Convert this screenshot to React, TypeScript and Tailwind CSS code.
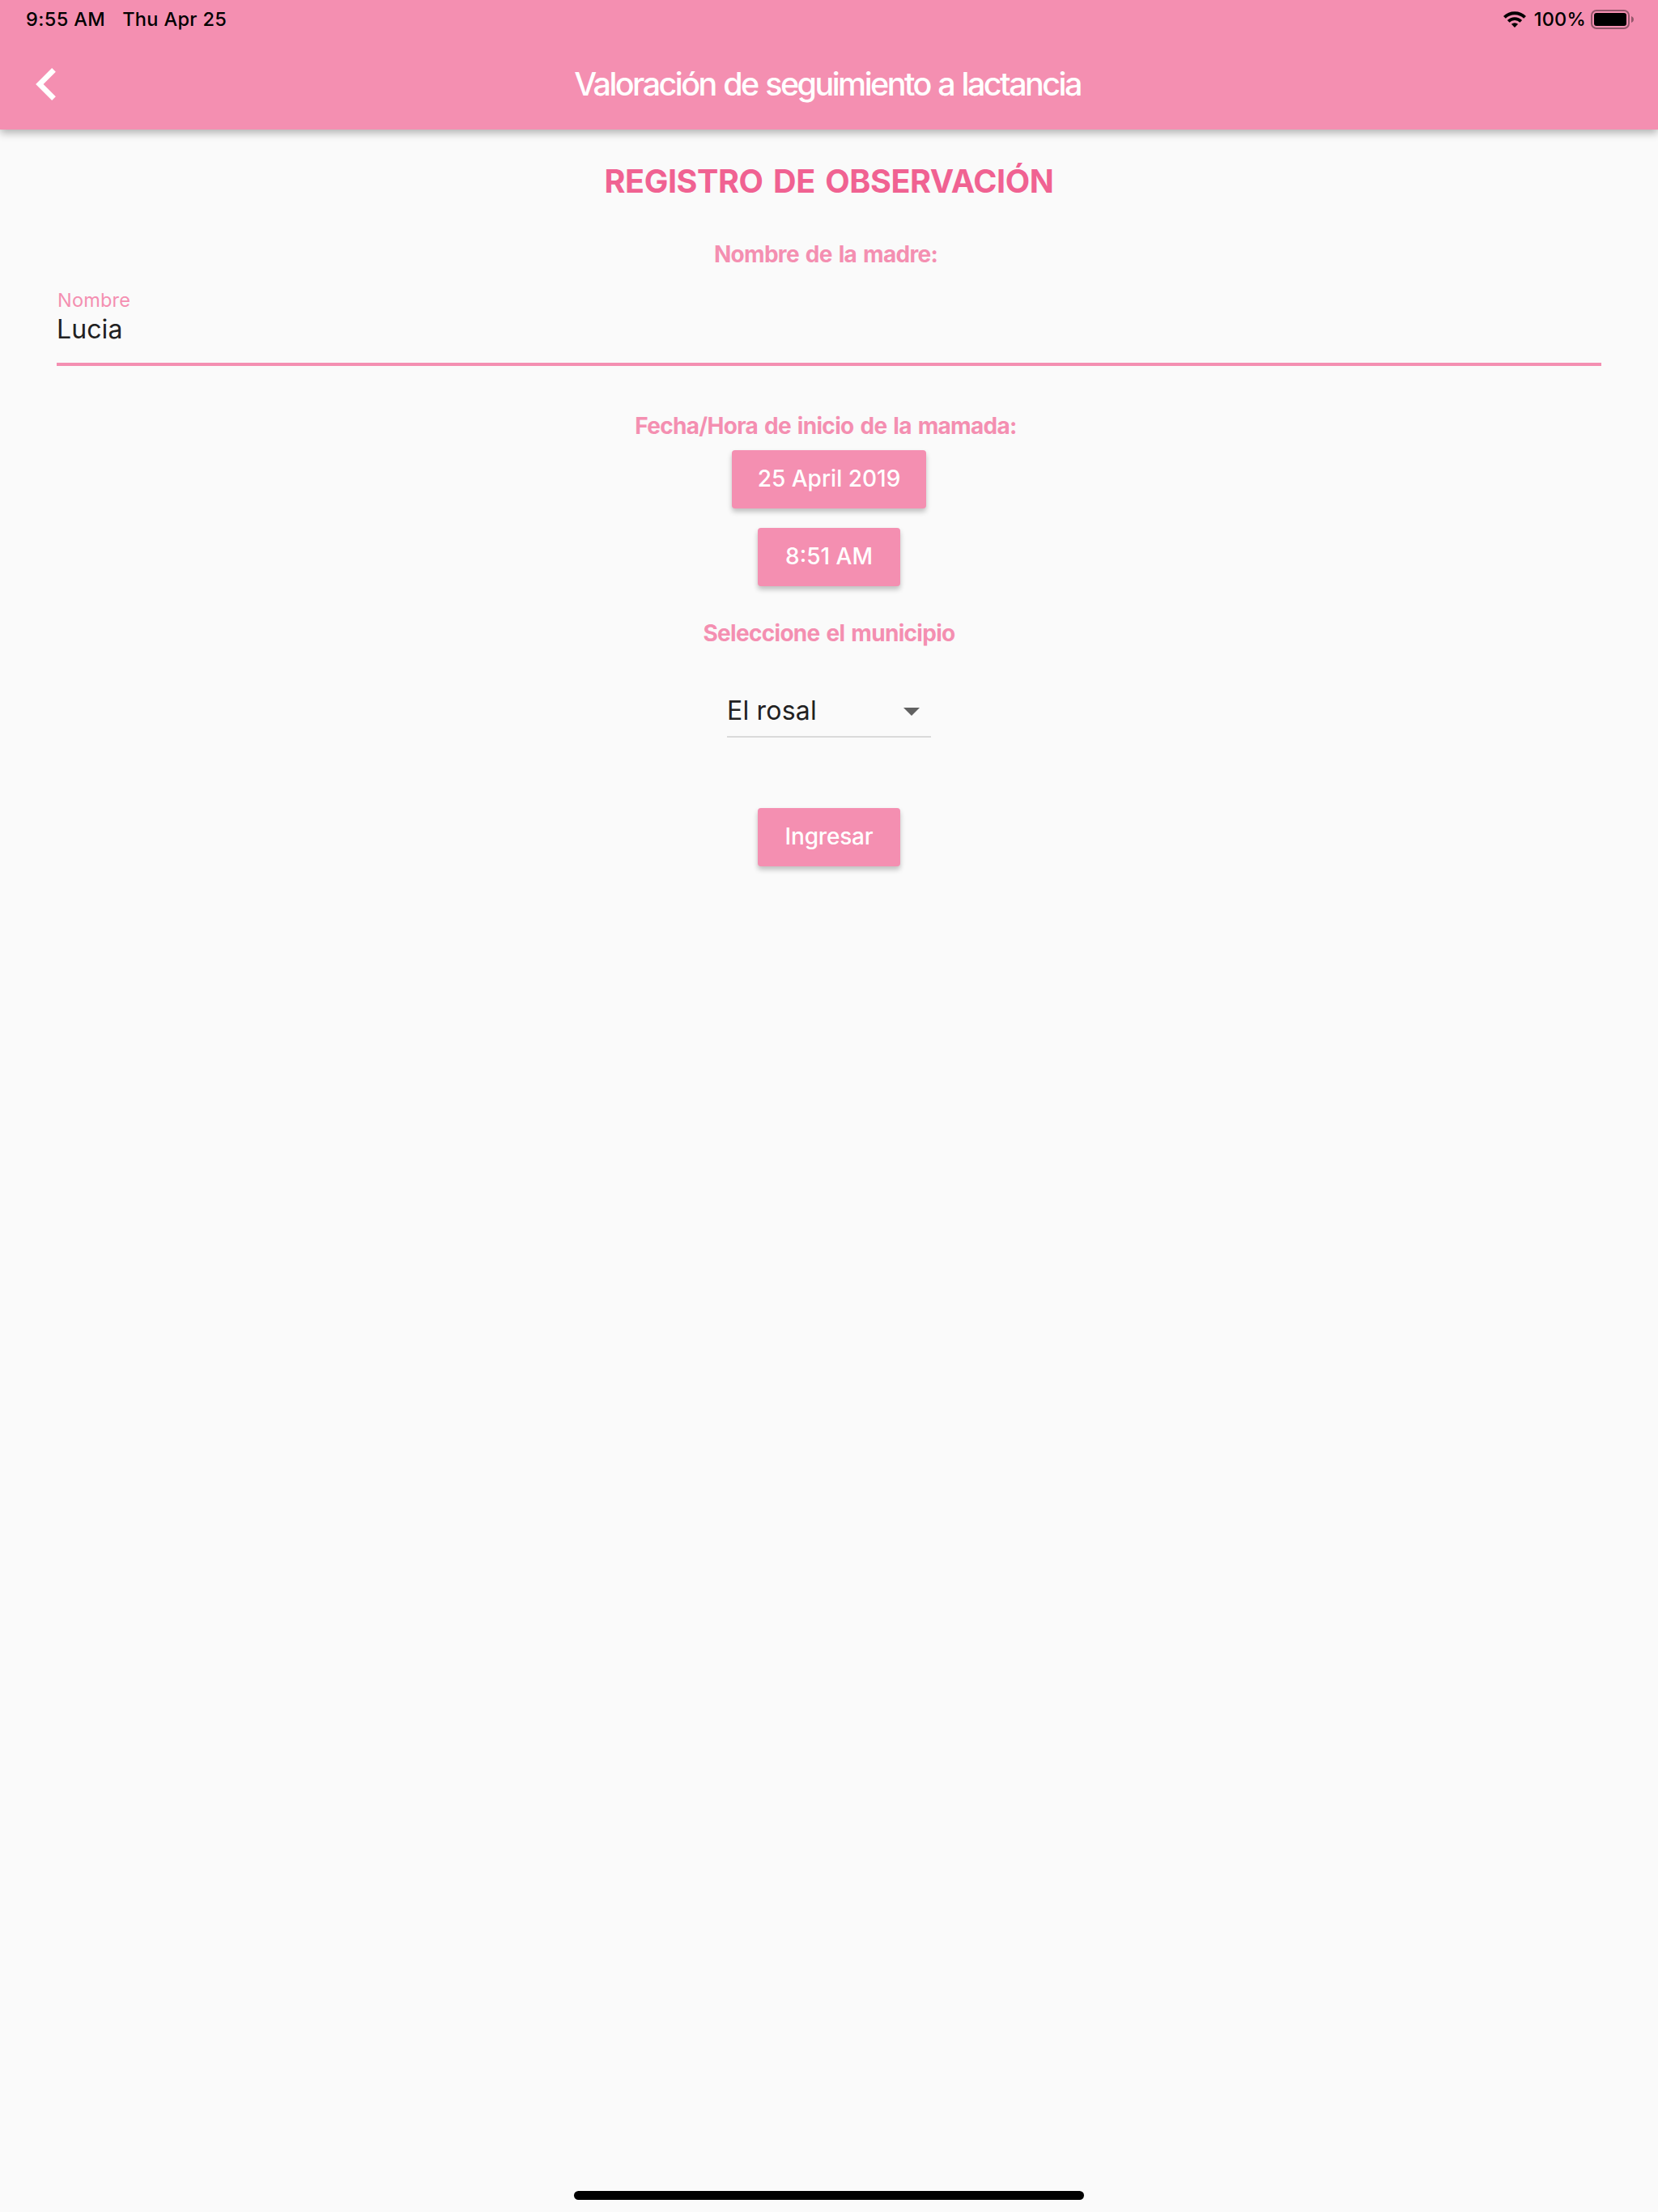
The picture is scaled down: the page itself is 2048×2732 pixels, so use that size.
import type { ReactNode } from 'react';

type SectionLabelProps = {
  className: string;
  children: ReactNode;
};

type RaisedButtonProps = {
  className: string;
  children: ReactNode;
};

function WifiIcon() {
  return (
    <svg width="28" height="20" viewBox="0 0 28 20" aria-hidden="true">
      <path d="M1.4 7.4a17.8 17.8 0 0 1 25.2 0" fill="none" stroke="#000" strokeWidth="4" />
      <path d="M6.2 12.3a11 11 0 0 1 15.6 0" fill="none" stroke="#000" strokeWidth="3.8" />
      <path d="M14 20l-4.1-4.2a5.9 5.9 0 0 1 8.2 0z" />
    </svg>
  );
}

function BatteryIcon() {
  return (
    <svg width="54" height="24" viewBox="0 0 54 24" aria-hidden="true">
      <rect x="1" y="1" width="46" height="22" rx="6" fill="none" stroke="#000" strokeOpacity="0.4" strokeWidth="2" />
      <rect x="4" y="4" width="40" height="16" rx="3" />
      <path d="M50 8c1.900.7 3 2.200 3 4s-1.100 3.300-3 4z" fillOpacity="0.4" />
    </svg>
  );
}

function StatusBar() {
  return (
    <div className="flex h-12 items-start justify-between pt-2 pr-[29px] pl-8 text-[23.500px] leading-8 font-medium text-black">
      <div className="flex gap-[21px]">
        <span className="tracking-[0.4px]">9:55 AM</span>
        <span className="tracking-[0.35px]">Thu Apr 25</span>
      </div>
      <div className="flex items-center">
        <WifiIcon />
        <span className="ml-2.5 tracking-[0.2px]">100%</span>
        <span className="ml-1.5">
          <BatteryIcon />
        </span>
      </div>
    </div>
  );
}

function AppBar() {
  return (
    <div className="grid h-28 grid-cols-[200px_1fr_200px] items-center">
      <button type="button" aria-label="Atrás" className="pl-11">
        <svg width="25" height="40" viewBox="8 6 7.410 12" fill="#fff" aria-hidden="true">
          <path d="M15.410 7.410L14 6l-6 6 6 6 1.410-1.410L10.830 12z" />
        </svg>
      </button>
      <h1 className="pr-1 text-center text-[39.500px] leading-12 font-medium tracking-[-2.550px] text-white [word-spacing:1.500px]">
        Valoración de seguimiento a lactancia
      </h1>
    </div>
  );
}

function SectionLabel({ className, children }: SectionLabelProps) {
  return (
    <p
      className={`text-[28px] leading-[34px] font-bold tracking-[-0.700px] text-[#f48fb1] [word-spacing:2px] ${className}`}
    >
      {children}
    </p>
  );
}

function RaisedButton({ className, children }: RaisedButtonProps) {
  return (
    <button
      type="button"
      className={`h-[72px] rounded-[4px] bg-[#f48fb1] pb-0.5 text-[28px] leading-[34px] font-medium text-white shadow-[0_4px_6px_rgba(0,0,0,0.24)] ${className}`}
    >
      {children}
    </button>
  );
}

export default function App() {
  return (
    <div className="flex h-[2732px] w-[2048px] flex-col bg-[#fafafa] font-['Inter',sans-serif]">
      <header className="h-40 bg-[#f48fb1] shadow-[0_4px_10px_rgba(0,0,0,0.3)]">
        <StatusBar />
        <AppBar />
      </header>

      <main className="flex flex-1 flex-col items-center px-[70px] pt-10">
        <h2 className="text-[39.500px] leading-12 font-bold tracking-[-0.400px] text-[#f06292] [word-spacing:3.500px]">
          REGISTRO DE OBSERVACIÓN
        </h2>

        <SectionLabel className="mt-[49px] mr-2">Nombre de la madre:</SectionLabel>
        <div className="mt-[26px] h-[95px] w-full border-b-4 border-[#f48fb1]">
          <p className="pl-px text-[23.500px] leading-7 tracking-[0.2px] text-[#f48fb1]">Nombre</p>
          <p className="mt-0.5 text-[32px] leading-10 font-[380] tracking-[0.1px] text-[#212121]">Lucia</p>
        </div>

        <SectionLabel className="mt-[57px] mr-2">Fecha/Hora de inicio de la mamada:</SectionLabel>
        <RaisedButton className="mt-[13px] w-60">25 April 2019</RaisedButton>
        <RaisedButton className="mt-6 w-44">8:51 AM</RaisedButton>

        <SectionLabel className="mt-[41px]">Seleccione el municipio</SectionLabel>
        <div className="mt-[59px] flex h-[53px] w-[252px] items-start justify-between border-b-2 border-[#dadada] pr-3.5">
          <span className="text-[32px] leading-10 font-[380] tracking-[0.2px] text-[#212121]">El rosal</span>
          <svg className="mt-4" width="20" height="10" viewBox="0 0 20 10" fill="#616161" aria-hidden="true">
            <path d="M0 0h20L10 10z" />
          </svg>
        </div>

        <RaisedButton className="mt-[87px] w-44 tracking-[-0.200px]">Ingresar</RaisedButton>
      </main>

      <footer className="flex justify-center pb-[15px]">
        <div className="h-[11px] w-[630px] rounded-full bg-black" />
      </footer>
    </div>
  );
}
